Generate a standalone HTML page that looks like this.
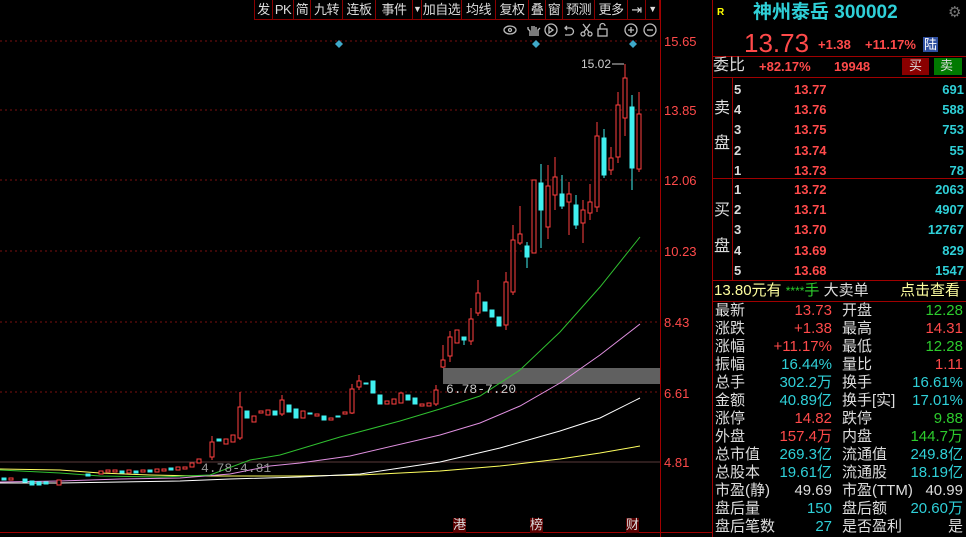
<!DOCTYPE html>
<html><head><meta charset="utf-8"><style>
*{margin:0;padding:0;box-sizing:border-box}
body{width:966px;height:537px;background:#000;overflow:hidden;position:relative;font-family:"Liberation Sans","Noto Sans CJK SC",sans-serif;}
.t{position:absolute;white-space:nowrap;line-height:1}
.tb{position:absolute;top:0;height:20px;border-right:1px solid #8a0000;border-bottom:1px solid #8a0000;color:#ddd;font-size:13px;line-height:19px;text-align:center;white-space:nowrap;overflow:hidden;letter-spacing:-0.5px}
.r{color:#ff4a4a}.c{color:#2fd0d8}.g{color:#2dcc2d}.w{color:#ddd}.y{color:#ffff80}
.row{position:absolute;left:716px;width:248px;height:18px;font-size:15px;line-height:18px}
.row span{position:absolute}
</style></head><body>
<svg width="966" height="537" style="position:absolute;left:0;top:0">
<g stroke="#7a1010" stroke-dasharray="2,3" stroke-width="1">
<line x1="0" y1="41" x2="660" y2="41"/><line x1="0" y1="110" x2="660" y2="110"/><line x1="0" y1="180" x2="660" y2="180"/><line x1="0" y1="251" x2="660" y2="251"/><line x1="0" y1="322" x2="660" y2="322"/><line x1="0" y1="392" x2="660" y2="392"/>
</g>
<line x1="0" y1="462" x2="660" y2="462" stroke="#5a3a3a"/>
<line x1="660.5" y1="0" x2="660.5" y2="537" stroke="#a00000"/>
<line x1="712.5" y1="0" x2="712.5" y2="537" stroke="#a00000"/>
<line x1="0" y1="532.5" x2="712" y2="532.5" stroke="#a00000"/>
<rect x="443" y="368" width="217" height="16" fill="#606060"/>
<g fill="#3fa9c9"><path d="M339 40l4 4-4 4-4-4z"/><path d="M536 40l4 4-4 4-4-4z"/><path d="M633 40l4 4-4 4-4-4z"/></g>
<polyline fill="none" stroke="#ffff60" points="0,469 60,470 100,473 150,475 200,476 300,476 360,475 440,471 500,466 560,459 600,453 640,446"/>
<polyline fill="none" stroke="#fff" points="0,483 60,483 120,482 180,481 230,479 300,477 360,474 440,462 500,448 560,431 600,418 640,398"/>
<polyline fill="none" stroke="#e090e0" points="0,482 60,481 120,479 180,478 230,474 270,466 300,463 350,456 440,435 480,423 520,406 560,383 600,355 640,324"/>
<polyline fill="none" stroke="#30c030" points="0,470 60,473 100,476 160,477 210,475 250,460 280,455 340,437 400,421 440,409 480,396 520,370 560,332 600,287 640,237"/>
<g stroke="#ff4040" fill="#000">
<rect x="9" y="478" width="4" height="2"/><rect x="57" y="480" width="4" height="5"/><rect x="99" y="471" width="4" height="3"/><rect x="106" y="470" width="4" height="2"/><rect x="113" y="470" width="4" height="2"/><rect x="127" y="470" width="4" height="3"/><rect x="141" y="470" width="4" height="2"/><rect x="155" y="469" width="4" height="3"/><rect x="162" y="469" width="4" height="2"/><rect x="176" y="467" width="4" height="3"/><rect x="183" y="467" width="4" height="2"/><rect x="190" y="463" width="4" height="4"/><rect x="197" y="459" width="4" height="4"/>
<line x1="212" y1="436" x2="212" y2="460"/><rect x="210" y="442" width="4" height="15"/>
<rect x="224" y="439" width="4" height="5"/><rect x="231" y="435" width="4" height="7"/>
<line x1="240" y1="392" x2="240" y2="440"/><rect x="238" y="407" width="4" height="31"/>
<rect x="252" y="416" width="4" height="6"/><rect x="259" y="411" width="4" height="2"/><rect x="266" y="410" width="4" height="5"/>
<line x1="282" y1="395" x2="282" y2="416"/><rect x="280" y="400" width="4" height="14"/>
<rect x="301" y="411" width="4" height="7"/><rect x="315" y="414" width="4" height="2"/><rect x="329" y="418" width="4" height="2"/><rect x="343" y="412" width="4" height="2"/>
<line x1="352" y1="384" x2="352" y2="414"/><rect x="350" y="389" width="4" height="24"/>
<line x1="359" y1="375" x2="359" y2="390"/><rect x="357" y="381" width="4" height="6"/>
<rect x="385" y="401" width="4" height="3"/><rect x="392" y="399" width="4" height="5"/><rect x="399" y="393" width="4" height="10"/><rect x="420" y="404" width="4" height="2"/><rect x="427" y="403" width="4" height="3"/>
<line x1="436" y1="385" x2="436" y2="406"/><rect x="434" y="390" width="4" height="14"/>
<line x1="443" y1="345" x2="443" y2="368"/><rect x="441" y="360" width="4" height="7"/>
<line x1="450" y1="331" x2="450" y2="362"/><rect x="448" y="337" width="4" height="19"/>
<rect x="455" y="330" width="4" height="13"/>
<line x1="471" y1="308" x2="471" y2="345"/><rect x="469" y="319" width="4" height="22"/>
<line x1="478" y1="280" x2="478" y2="316"/><rect x="476" y="293" width="4" height="20"/>
<line x1="506" y1="272" x2="506" y2="330"/><rect x="504" y="282" width="4" height="43"/>
<line x1="513" y1="225" x2="513" y2="295"/><rect x="511" y="240" width="4" height="52"/>
<line x1="520" y1="206" x2="520" y2="245"/><rect x="518" y="234" width="4" height="9"/>
<rect x="532" y="180" width="4" height="73"/>
<line x1="548" y1="165" x2="548" y2="239"/><rect x="546" y="186" width="4" height="41"/>
<line x1="555" y1="157" x2="555" y2="210"/><rect x="553" y="177" width="4" height="18"/>
<line x1="569" y1="182" x2="569" y2="235"/><rect x="567" y="194" width="4" height="8"/>
<line x1="583" y1="200" x2="583" y2="243"/><rect x="581" y="210" width="4" height="13"/>
<line x1="590" y1="184" x2="590" y2="220"/><rect x="588" y="202" width="4" height="11"/>
<line x1="597" y1="122" x2="597" y2="212"/><rect x="595" y="136" width="4" height="71"/>
<line x1="611" y1="147" x2="611" y2="175"/><rect x="609" y="158" width="4" height="12"/>
<line x1="618" y1="92" x2="618" y2="163"/><rect x="616" y="105" width="4" height="52"/>
<line x1="625" y1="64" x2="625" y2="136"/><rect x="623" y="78" width="4" height="40"/>
<line x1="639" y1="92" x2="639" y2="172"/><rect x="637" y="114" width="4" height="55"/>
</g>
<g fill="#40f0f0" stroke="#40f0f0">
<rect x="2" y="478" width="4" height="2"/><rect x="23" y="479" width="4" height="3"/><rect x="30" y="481" width="4" height="4"/><rect x="37" y="482" width="4" height="3"/><rect x="44" y="482" width="4" height="2"/><rect x="86" y="474" width="4" height="2"/><rect x="120" y="471" width="4" height="2"/><rect x="134" y="471" width="4" height="2"/><rect x="148" y="470" width="4" height="2"/><rect x="169" y="468" width="4" height="2"/>
<rect x="217" y="439" width="4" height="2"/><rect x="245" y="411" width="4" height="7"/><rect x="273" y="411" width="4" height="4"/><rect x="287" y="405" width="4" height="7"/><rect x="294" y="409" width="4" height="9"/><rect x="308" y="413" width="4" height="1"/><rect x="322" y="416" width="4" height="4"/><rect x="336" y="416" width="4" height="1"/><rect x="364" y="383" width="4" height="1"/><rect x="371" y="381" width="4" height="12"/><rect x="378" y="395" width="4" height="9"/><rect x="406" y="395" width="4" height="5"/><rect x="413" y="398" width="4" height="6"/>
<rect x="462" y="337" width="4" height="3"/><line x1="464" y1="340" x2="464" y2="345"/>
<rect x="483" y="302" width="4" height="9"/><rect x="490" y="310" width="4" height="7"/><rect x="497" y="317" width="4" height="9"/>
<line x1="527" y1="242" x2="527" y2="268"/><rect x="525" y="246" width="4" height="11"/>
<line x1="541" y1="164" x2="541" y2="248"/><rect x="539" y="183" width="4" height="27"/>
<line x1="562" y1="175" x2="562" y2="209"/><rect x="560" y="194" width="4" height="12"/>
<line x1="576" y1="195" x2="576" y2="229"/><rect x="574" y="205" width="4" height="20"/>
<line x1="604" y1="129" x2="604" y2="178"/><rect x="602" y="138" width="4" height="37"/>
<line x1="632" y1="95" x2="632" y2="190"/><rect x="630" y="107" width="4" height="61"/>
</g>
<line x1="612" y1="64" x2="624" y2="64" stroke="#ccc"/>
<g fill="none" stroke="#bbb" stroke-width="1.3">
<ellipse cx="510" cy="30" rx="6" ry="4"/><circle cx="510" cy="30" r="1.5"/>
<path d="M530 36v-5l-2-2v-2M532 36v-10M534 36v-10M536 36v-9M538 36v-6l2-2"/>
<circle cx="551" cy="30" r="6"/><path d="M549 27v6l4-3z"/>
<path d="M565 28h5a3 3 0 0 1 0 7h-5M567 26l-2 2 2 2"/>
<circle cx="583" cy="34" r="2"/><circle cx="590" cy="34" r="2"/><path d="M584 32l6-8M589 32l-6-8"/>
<rect x="598" y="29" width="9" height="7"/><path d="M600 29v-3a2.5 2.5 0 0 1 5 0"/>
<circle cx="631" cy="30" r="6"/><path d="M628 30h6M631 27v6"/>
<circle cx="650" cy="30" r="6"/><path d="M647 30h6"/>
</g>
<rect x="453" y="518" width="13" height="15" fill="#5a0000"/><rect x="530" y="518" width="13" height="15" fill="#5a0000"/><rect x="626" y="518" width="13" height="15" fill="#5a0000"/>
<g stroke="#a00000"><line x1="713" y1="56.5" x2="966" y2="56.5"/><line x1="713" y1="77.5" x2="966" y2="77.5"/><line x1="713" y1="178.5" x2="966" y2="178.5"/><line x1="713" y1="280.5" x2="966" y2="280.5"/><line x1="713" y1="301.5" x2="966" y2="301.5"/><line x1="732.5" y1="78" x2="732.5" y2="280"/></g>
<rect x="902" y="58" width="27" height="17" fill="#8a0000"/><rect x="934" y="58" width="28" height="17" fill="#007a00"/>
</svg>
<div class="tb" style="left:254px;width:19px;border-left:1px solid #8a0000">发</div>
<div class="tb" style="left:273px;width:21px">PK</div>
<div class="tb" style="left:294px;width:17px">简</div>
<div class="tb" style="left:311px;width:32px">九转</div>
<div class="tb" style="left:343px;width:33px">连板</div>
<div class="tb" style="left:376px;width:37px">事件</div>
<div class="tb" style="left:413px;width:9px;font-size:9px">▼</div>
<div class="tb" style="left:422px;width:40px">加自选</div>
<div class="tb" style="left:462px;width:34px">均线</div>
<div class="tb" style="left:496px;width:33px">复权</div>
<div class="tb" style="left:529px;width:17px">叠</div>
<div class="tb" style="left:546px;width:17px">窗</div>
<div class="tb" style="left:563px;width:32px">预测</div>
<div class="tb" style="left:595px;width:33px">更多</div>
<div class="tb" style="left:628px;width:18px">⇥</div>
<div class="tb" style="left:646px;width:14px;font-size:9px">▼</div>
<div class="t r" style="left:664px;top:35px;font-size:13px">15.65</div>
<div class="t r" style="left:664px;top:104px;font-size:13px">13.85</div>
<div class="t r" style="left:664px;top:174px;font-size:13px">12.06</div>
<div class="t r" style="left:664px;top:245px;font-size:13px">10.23</div>
<div class="t r" style="left:664px;top:316px;font-size:13px">8.43</div>
<div class="t r" style="left:664px;top:387px;font-size:13px">6.61</div>
<div class="t r" style="left:664px;top:456px;font-size:13px">4.81</div>
<div class="t" style="left:581px;top:58px;font-size:12px;color:#ccc">15.02</div>
<div class="t" style="left:446px;top:383px;font-size:13px;color:#ccc;font-family:'Liberation Mono',monospace">6.78-7.20</div>
<div class="t" style="left:201px;top:462px;font-size:13px;color:#999;font-family:'Liberation Mono',monospace">4.78-4.81</div>
<div class="t w" style="left:453px;top:518px;font-size:13px">港</div>
<div class="t w" style="left:530px;top:518px;font-size:13px">榜</div>
<div class="t w" style="left:626px;top:518px;font-size:13px">财</div>
<div class="t" style="left:717px;top:8px;font-size:10px;color:#ff0;font-weight:bold">R</div>
<div class="t c" style="left:753px;top:3px;font-size:19px;font-weight:bold">神州泰岳 300002</div>
<div class="t" style="left:948px;top:5px;font-size:15px;color:#777">⚙</div>
<div class="t r" style="left:744px;top:30px;font-size:26px">13.73</div>
<div class="t r" style="left:818px;top:38px;font-size:13px;font-weight:bold">+1.38</div>
<div class="t r" style="left:865px;top:38px;font-size:13px;font-weight:bold">+11.17%</div>
<div class="t" style="left:923px;top:37px;font-size:13px;background:#3050a0;color:#fff;padding:1px">陆</div>
<div class="t w" style="left:713px;top:58px;font-size:16px">委比</div>
<div class="t r" style="left:759px;top:60px;font-size:13px;font-weight:bold">+82.17%</div>
<div class="t r" style="left:834px;top:60px;font-size:13px;font-weight:bold">19948</div>
<div class="t w" style="left:909px;top:59px;font-size:13px">买</div>
<div class="t w" style="left:940px;top:59px;font-size:13px">卖</div>
<div class="t w" style="left:714px;top:101px;font-size:16px">卖</div>
<div class="t w" style="left:714px;top:136px;font-size:16px">盘</div>
<div class="t w" style="left:714px;top:203px;font-size:16px">买</div>
<div class="t w" style="left:714px;top:239px;font-size:16px">盘</div>
<div style="position:absolute;left:734px;top:80px;width:230px;font-size:13px;font-weight:bold;line-height:20.2px">
<div style="position:relative;height:20.2px"><span class="w" style="position:absolute;left:0">5</span><span class="r" style="position:absolute;left:60px">13.77</span><span class="c" style="position:absolute;right:0">691</span></div>
<div style="position:relative;height:20.2px"><span class="w" style="position:absolute;left:0">4</span><span class="r" style="position:absolute;left:60px">13.76</span><span class="c" style="position:absolute;right:0">588</span></div>
<div style="position:relative;height:20.2px"><span class="w" style="position:absolute;left:0">3</span><span class="r" style="position:absolute;left:60px">13.75</span><span class="c" style="position:absolute;right:0">753</span></div>
<div style="position:relative;height:20.2px"><span class="w" style="position:absolute;left:0">2</span><span class="r" style="position:absolute;left:60px">13.74</span><span class="c" style="position:absolute;right:0">55</span></div>
<div style="position:relative;height:20.2px"><span class="w" style="position:absolute;left:0">1</span><span class="r" style="position:absolute;left:60px">13.73</span><span class="c" style="position:absolute;right:0">78</span></div>
</div>
<div style="position:absolute;left:734px;top:180px;width:230px;font-size:13px;font-weight:bold;line-height:20.2px">
<div style="position:relative;height:20.2px"><span class="w" style="position:absolute;left:0">1</span><span class="r" style="position:absolute;left:60px">13.72</span><span class="c" style="position:absolute;right:0">2063</span></div>
<div style="position:relative;height:20.2px"><span class="w" style="position:absolute;left:0">2</span><span class="r" style="position:absolute;left:60px">13.71</span><span class="c" style="position:absolute;right:0">4907</span></div>
<div style="position:relative;height:20.2px"><span class="w" style="position:absolute;left:0">3</span><span class="r" style="position:absolute;left:60px">13.70</span><span class="c" style="position:absolute;right:0">12767</span></div>
<div style="position:relative;height:20.2px"><span class="w" style="position:absolute;left:0">4</span><span class="r" style="position:absolute;left:60px">13.69</span><span class="c" style="position:absolute;right:0">829</span></div>
<div style="position:relative;height:20.2px"><span class="w" style="position:absolute;left:0">5</span><span class="r" style="position:absolute;left:60px">13.68</span><span class="c" style="position:absolute;right:0">1547</span></div>
</div>
<div class="t" style="left:714px;top:283px;font-size:15px;color:#ffffa0">13.80<span>元有</span> <span class="g" style="font-size:12px">****</span><span class="g">手</span> <span class="w">大卖单</span></div>
<div class="t" style="left:900px;top:283px;font-size:15px;color:#ffffa0">点击查看</div>
<div style="position:absolute;left:715px;top:302px;width:249px;font-size:15px;line-height:18px">
<div class="row" style="position:relative;left:0"><span class="w">最新</span><span class="r" style="right:131px">13.73</span><span class="w" style="left:127px">开盘</span><span class="g" style="right:0">12.28</span></div>
<div class="row" style="position:relative;left:0"><span class="w">涨跌</span><span class="r" style="right:131px">+1.38</span><span class="w" style="left:127px">最高</span><span class="r" style="right:0">14.31</span></div>
<div class="row" style="position:relative;left:0"><span class="w">涨幅</span><span class="r" style="right:131px">+11.17%</span><span class="w" style="left:127px">最低</span><span class="g" style="right:0">12.28</span></div>
<div class="row" style="position:relative;left:0"><span class="w">振幅</span><span class="c" style="right:131px">16.44%</span><span class="w" style="left:127px">量比</span><span class="r" style="right:0">1.11</span></div>
<div class="row" style="position:relative;left:0"><span class="w">总手</span><span class="c" style="right:131px">302.2万</span><span class="w" style="left:127px">换手</span><span class="c" style="right:0">16.61%</span></div>
<div class="row" style="position:relative;left:0"><span class="w">金额</span><span class="c" style="right:131px">40.89亿</span><span class="w" style="left:127px">换手[实]</span><span class="c" style="right:0">17.01%</span></div>
<div class="row" style="position:relative;left:0"><span class="w">涨停</span><span class="r" style="right:131px">14.82</span><span class="w" style="left:127px">跌停</span><span class="g" style="right:0">9.88</span></div>
<div class="row" style="position:relative;left:0"><span class="w">外盘</span><span class="r" style="right:131px">157.4万</span><span class="w" style="left:127px">内盘</span><span class="g" style="right:0">144.7万</span></div>
<div class="row" style="position:relative;left:0"><span class="w">总市值</span><span class="c" style="right:131px">269.3亿</span><span class="w" style="left:127px">流通值</span><span class="c" style="right:0">249.8亿</span></div>
<div class="row" style="position:relative;left:0"><span class="w">总股本</span><span class="c" style="right:131px">19.61亿</span><span class="w" style="left:127px">流通股</span><span class="c" style="right:0">18.19亿</span></div>
<div class="row" style="position:relative;left:0"><span class="w">市盈(静)</span><span class="w" style="right:131px">49.69</span><span class="w" style="left:127px">市盈(TTM)</span><span class="w" style="right:0">40.99</span></div>
<div class="row" style="position:relative;left:0"><span class="w">盘后量</span><span class="c" style="right:131px">150</span><span class="w" style="left:127px">盘后额</span><span class="c" style="right:0">20.60万</span></div>
<div class="row" style="position:relative;left:0"><span class="w">盘后笔数</span><span class="c" style="right:131px">27</span><span class="w" style="left:127px">是否盈利</span><span class="w" style="right:0">是</span></div>
</div>
</body></html>
